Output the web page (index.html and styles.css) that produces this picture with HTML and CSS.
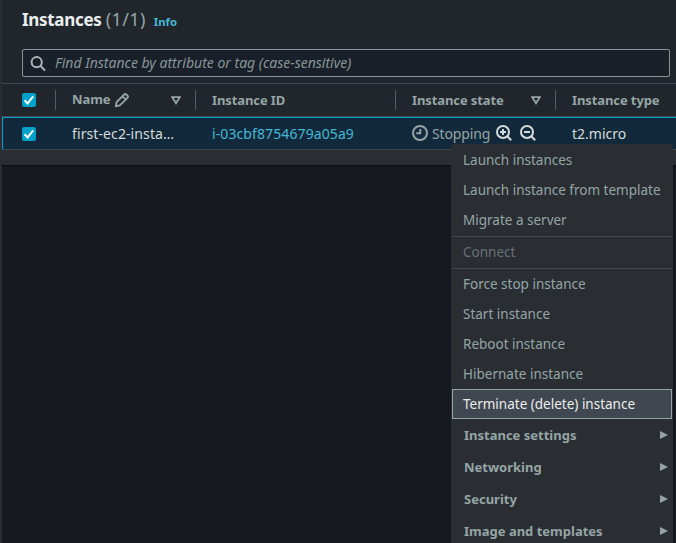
FILE: index.html
```html
<!DOCTYPE html>
<html lang="en">
<head>
<meta charset="utf-8">
<title>Instances</title>
<link rel="stylesheet" href="styles.css">
</head>
<body>
<main class="panel">
  <header class="panel-header">
    <h1 class="title">Instances <span class="count">(1/1)</span></h1>
    <a class="info">Info</a>
  </header>
  <div class="search-row">
    <div class="search">
      <svg class="search-icon" width="16" height="16" viewBox="0 0 16 16"><circle cx="6.7" cy="6.2" r="5.1"/><path d="M10.3 9.8l4.8 4.8"/></svg>
      <span class="placeholder">Find Instance by attribute or tag (case-sensitive)</span>
    </div>
  </div>
  <div class="row head">
    <div class="cell check-cell"><span class="checkbox"><svg width="14" height="14" viewBox="0 0 14 14"><path d="M2.6 7.2l3 3.2 5.6-7"/></svg></span></div>
    <div class="cell"><span class="name">Name</span>
      <svg class="pencil" width="16" height="16" viewBox="0 0 16 16"><path d="M1.8 14.2l.8-4 7.6-7.7c.6-.6 1.5-.6 2.1 0l1.2 1.2c.6.6.6 1.5 0 2.1l-7.7 7.6zM8.6 4.4l3 3"/></svg>
      <svg class="sort" width="10" height="9" viewBox="0 0 10 9"><path d="M1.2 1.2h7.6L5 7.3z"/></svg>
    </div>
    <div class="cell"><span>Instance ID</span></div>
    <div class="cell"><span>Instance state</span>
      <svg class="sort" width="10" height="9" viewBox="0 0 10 9"><path d="M1.2 1.2h7.6L5 7.3z"/></svg>
    </div>
    <div class="cell"><span>Instance type</span></div>
  </div>
  <div class="row item">
    <div class="cell check-cell"><span class="checkbox"><svg width="14" height="14" viewBox="0 0 14 14"><path d="M2.6 7.2l3 3.2 5.6-7"/></svg></span></div>
    <div class="cell first">first-ec2-insta…</div>
    <div class="cell link">i-03cbf8754679a05a9</div>
    <div class="cell">
      <svg class="clock" width="16" height="16" viewBox="0 0 16 16"><circle cx="8" cy="8" r="7"/><path d="M8.3 4v4.3H4.2"/></svg>
      <span class="status">Stopping</span>
      <svg class="glass" width="16" height="16" viewBox="0 0 16 16"><circle cx="7" cy="7" r="6"/><path d="M11.2 11.2l4 4M4 7h6M7 4v6"/></svg>
      <svg class="glass second" width="16" height="16" viewBox="0 0 16 16"><circle cx="7" cy="7" r="6"/><path d="M11.2 11.2l4 4M4 7h6"/></svg>
    </div>
    <div class="cell">t2.micro</div>
  </div>
  <div class="panel-footer"></div>
</main>
<nav class="menu">
  <div class="menu-item">Launch instances</div>
  <div class="menu-item">Launch instance from template</div>
  <div class="menu-item">Migrate a server</div>
  <div class="menu-item divided disabled">Connect</div>
  <div class="menu-item divided">Force stop instance</div>
  <div class="menu-item">Start instance</div>
  <div class="menu-item">Reboot instance</div>
  <div class="menu-item">Hibernate instance</div>
  <div class="menu-item selected">Terminate (delete) instance</div>
  <div class="menu-group">Instance settings<i class="arrow"></i></div>
  <div class="menu-group">Networking<i class="arrow"></i></div>
  <div class="menu-group">Security<i class="arrow"></i></div>
  <div class="menu-group">Image and templates<i class="arrow"></i></div>
</nav>
</body>
</html>
```
FILE: styles.css
```css
* { box-sizing: border-box; }
body {
  margin: 0;
  height: 543px;
  overflow: hidden;
  position: relative;
  background: #16191f;
  border-left: 2px solid #2a2e33;
  font-family: "Noto Sans", sans-serif;
  color: #d5dbdb;
}
svg { fill: none; flex: none; }

.panel {
  background: #2a2e33;
  box-shadow: 0 1px 1px #0b0d11;
}
.panel-header {
  display: flex;
  align-items: baseline;
  height: 49px;
  padding: 7px 0 0 20px;
  background: #21252c;
}
.title {
  margin: 0;
  color: #eaeded;
  font-size: 17px;
  letter-spacing: -.3px;
  line-height: 24px;
}
.count {
  color: #95a5a6;
  font-size: 18px;
  font-weight: 400;
  letter-spacing: .4px;
}
.info { margin-left: 8px; color: #44b9d6; font-size: 11.3px; font-weight: 700; }
.search-row {
  height: 35px;
  padding: 0 6px 0 20px;
  background: #21252c;
  border-bottom: 1px solid #414750;
}
.search {
  display: flex;
  align-items: center;
  height: 28px;
  padding-left: 7px;
  background: #1a2029;
  border: 1px solid #879596;
  border-radius: 2px;
}
.search-icon { stroke: #aab7b8; stroke-width: 2; margin-top: 1px; }
.placeholder {
  margin-left: 9px;
  color: #879596;
  font-size: 14px;
  font-style: italic;
  line-height: 20px;
}

.row { display: grid; grid-template-columns: 54px 140px 200px 160px 1fr; }
.cell {
  display: flex;
  align-items: center;
  padding-left: 16px;
  white-space: nowrap;
}
.check-cell { padding-left: 20px; }
.head {
  height: 33px;
  padding: 6px 0;
  background: #21252c;
  border-bottom: 1px solid #414750;
  color: #95a5a6;
  font-size: 13px;
  font-weight: 700;
  letter-spacing: -.1px;
}
.head .cell { border-right: 1px solid #545b64; }
.head .cell:last-child { border-right: 0; }
.name { margin-bottom: 2px; }
.checkbox {
  width: 14px;
  height: 14px;
  background: #00a1c9;
  border-radius: 2px;
}
.checkbox svg { display: block; stroke: #fff; stroke-width: 2; }
.pencil { margin-left: 4px; stroke: #95a5a6; stroke-width: 1.9; stroke-linejoin: round; }
.sort { margin-left: auto; margin-right: 14px; stroke: #95a5a6; stroke-width: 1.8; }
.item {
  height: 33px;
  background: #12293b;
  border-top: 1px solid #00a1c9;
  border-left: 1px solid #00a1c9;
  border-bottom: 1px solid #414750;
  grid-template-columns: 53px 140px 200px 160px 1fr;
  font-size: 14px;
}
.item .check-cell { padding-left: 19px; }
.item .cell { padding-bottom: 1px; }
.item .check-cell { padding-bottom: 0; }
.first { letter-spacing: .1px; }
.link { color: #44b9d6; letter-spacing: .1px; }
.clock { stroke: #95a5a6; stroke-width: 2; }
.status { margin: 0 6px 0 4px; color: #95a5a6; letter-spacing: -.15px; }
.glass { stroke: #d5dbdb; stroke-width: 2; margin-bottom: 1px; }
.second { margin-left: 8px; }
.panel-footer { height: 15px; }

.menu {
  position: absolute;
  left: 449px;
  top: 144px;
  width: 222px;
  height: 410px;
  padding: 1px 1px 0;
  background: #2a2e33;
  border-radius: 2px;
  color: #95a5a6;
  font-size: 13.5px;
  white-space: nowrap;
}
.menu-item { height: 30px; padding-left: 11px; line-height: 30px; }
.divided { height: 32px; border-top: 1px solid #414750; line-height: 30px; }
.menu-item:nth-child(3) { height: 31px; }
.disabled { color: #687078; }
.divided + .divided { height: 31px; }
.selected {
  height: 30px;
  padding-left: 10px;
  background: #414750;
  border: 1px solid #95a5a6;
  color: #eaeded;
  line-height: 28px;
}
.menu-group {
  display: flex;
  align-items: center;
  justify-content: space-between;
  height: 32px;
  padding: 0 4px 0 12px;
  font-size: 13px;
  font-weight: 700;
}
.arrow {
  border: 4px solid transparent;
  border-left: 8px solid #95a5a6;
  border-right: 0;
}
```
